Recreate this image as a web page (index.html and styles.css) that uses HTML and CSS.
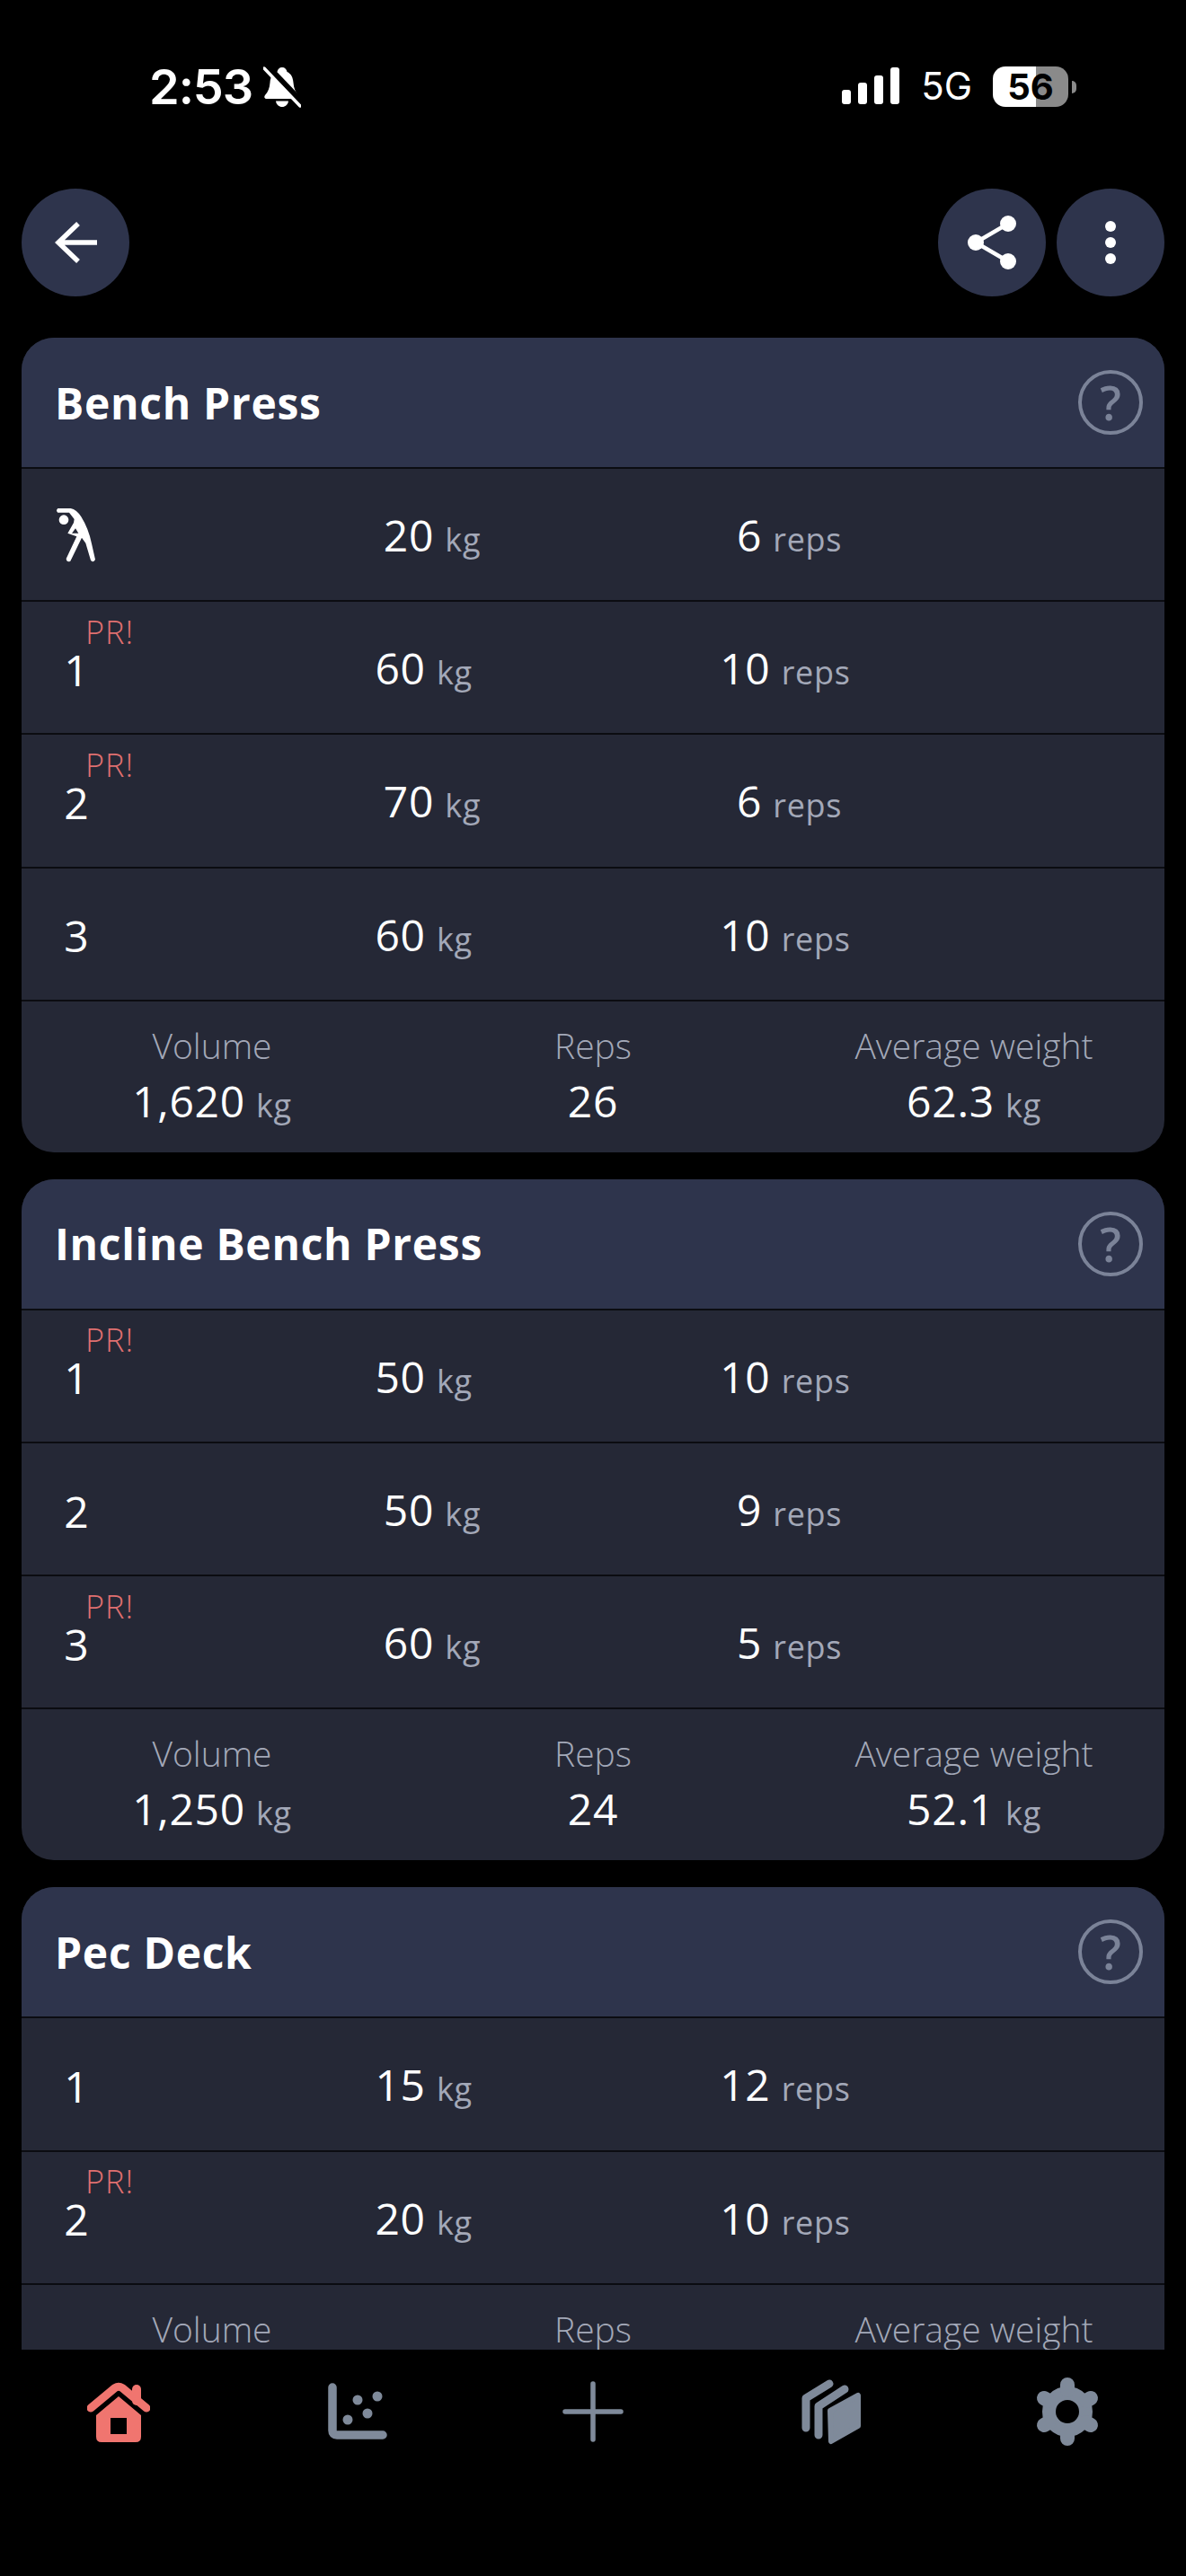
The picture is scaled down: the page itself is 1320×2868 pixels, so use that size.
FILE: index.html
```html
<!DOCTYPE html>
<html lang="en">
<head>
    <meta charset="UTF-8">
    <meta name="viewport" content="width=device-width, initial-scale=1.0">
    <title>Workout</title>
    <link rel="stylesheet" href="styles.css">
</head>

<body>
    <div class="app">
        <div class="status-bar">
            <div class="status-left">
                <span class="time">2:53</span>
                <svg class="bell" viewBox="0 0 42 46">
                    <path d="M21 1c-3 0-5 2-5.500 5C10 8 8 12 7.500 18c-.5 6-2 10-5.500 14-1.500 2-.5 4 2 4h33c2.500 0 3.500-2 2-4-3.500-4-5-8-5.500-14C33 12 31 8 26.500 6 26 3 24 1 21 1z" fill="#fff"/>
                    <path d="M14 38.500h14c-.5 4-3.500 6.500-7 6.500s-6.500-2.500-7-6.500z" fill="#fff"/>
                    <path d="M3 -1L44 42" stroke="#000" stroke-width="8"/>
                    <path d="M1 2L41 44" stroke="#fff" stroke-width="3.500" stroke-linecap="round"/>
                </svg>
            </div>
            <div class="status-right">
                <div class="signal">
                    <span class="bar bar-1"></span>
                    <span class="bar bar-2"></span>
                    <span class="bar bar-3"></span>
                    <span class="bar bar-4"></span>
                </div>
                <span class="network">5G</span>
                <div class="battery"><span class="battery-level">56</span></div>
                <span class="battery-nub"></span>
            </div>
        </div>

        <div class="top-bar">
            <a class="round-btn">
                <svg width="60" height="60" viewBox="0 0 60 60"><path d="M11 30H54M33 9L11 30L33 51" fill="none" stroke="#fff" stroke-width="5.500"/></svg>
            </a>
            <div class="top-actions">
                <a class="round-btn">
                    <svg width="60" height="60" viewBox="0 0 60 60"><path d="M48 9L12 30L48 51" fill="none" stroke="#fff" stroke-width="4.500"/><circle cx="48" cy="9" r="9" fill="#fff"/><circle cx="12" cy="30" r="9" fill="#fff"/><circle cx="48" cy="51" r="9" fill="#fff"/></svg>
                </a>
                <a class="round-btn">
                    <svg width="60" height="60" viewBox="0 0 60 60"><circle cx="30" cy="12" r="6" fill="#fff"/><circle cx="30" cy="30" r="6" fill="#fff"/><circle cx="30" cy="48" r="6" fill="#fff"/></svg>
                </a>
            </div>
        </div>

        <div class="list">
            <!-- Bench Press -->
            <div class="card">
                <div class="card-header">
                    <span class="card-title">Bench Press</span>
                    <span class="help">?</span>
                </div>
                <div class="set">
                    <div class="set-index">
                        <svg class="warmup" viewBox="66 66 136 192"><path fill-rule="evenodd" d="M72 72H115Q135 76 150 100Q175 140 185 190L197 243Q190 256 182 245L165 188L152 170L114 248Q102 254 100 240L135 166L105 155L125 120L127 108L110 86H72Q64 79 72 72ZM119 155H141L131 139Z" fill="#fff"/><circle cx="92" cy="110" r="16" fill="#fff"/></svg>
                    </div>
                    <div class="set-values">
                        <span class="value">20 <small>kg</small></span>
                        <span class="value">6 <small>reps</small></span>
                    </div>
                </div>
                <div class="set">
                    <div class="set-index">1<span class="pr">PR!</span></div>
                    <div class="set-values">
                        <span class="value">60 <small>kg</small></span>
                        <span class="value">10 <small>reps</small></span>
                    </div>
                </div>
                <div class="set">
                    <div class="set-index">2<span class="pr">PR!</span></div>
                    <div class="set-values">
                        <span class="value">70 <small>kg</small></span>
                        <span class="value">6 <small>reps</small></span>
                    </div>
                </div>
                <div class="set">
                    <div class="set-index">3</div>
                    <div class="set-values">
                        <span class="value">60 <small>kg</small></span>
                        <span class="value">10 <small>reps</small></span>
                    </div>
                </div>
                <div class="summary">
                    <div class="summary-item"><span class="summary-label">Volume</span><span class="value">1,620 <small>kg</small></span></div>
                    <div class="summary-item"><span class="summary-label">Reps</span><span class="value">26</span></div>
                    <div class="summary-item"><span class="summary-label">Average weight</span><span class="value">62.3 <small>kg</small></span></div>
                </div>
            </div>

            <!-- Incline Bench Press -->
            <div class="card">
                <div class="card-header">
                    <span class="card-title">Incline Bench Press</span>
                    <span class="help">?</span>
                </div>
                <div class="set">
                    <div class="set-index">1<span class="pr">PR!</span></div>
                    <div class="set-values">
                        <span class="value">50 <small>kg</small></span>
                        <span class="value">10 <small>reps</small></span>
                    </div>
                </div>
                <div class="set">
                    <div class="set-index">2</div>
                    <div class="set-values">
                        <span class="value">50 <small>kg</small></span>
                        <span class="value">9 <small>reps</small></span>
                    </div>
                </div>
                <div class="set">
                    <div class="set-index">3<span class="pr">PR!</span></div>
                    <div class="set-values">
                        <span class="value">60 <small>kg</small></span>
                        <span class="value">5 <small>reps</small></span>
                    </div>
                </div>
                <div class="summary">
                    <div class="summary-item"><span class="summary-label">Volume</span><span class="value">1,250 <small>kg</small></span></div>
                    <div class="summary-item"><span class="summary-label">Reps</span><span class="value">24</span></div>
                    <div class="summary-item"><span class="summary-label">Average weight</span><span class="value">52.1 <small>kg</small></span></div>
                </div>
            </div>

            <!-- Pec Deck -->
            <div class="card">
                <div class="card-header">
                    <span class="card-title">Pec Deck</span>
                    <span class="help">?</span>
                </div>
                <div class="set">
                    <div class="set-index">1</div>
                    <div class="set-values">
                        <span class="value">15 <small>kg</small></span>
                        <span class="value">12 <small>reps</small></span>
                    </div>
                </div>
                <div class="set">
                    <div class="set-index">2<span class="pr">PR!</span></div>
                    <div class="set-values">
                        <span class="value">20 <small>kg</small></span>
                        <span class="value">10 <small>reps</small></span>
                    </div>
                </div>
                <div class="summary">
                    <div class="summary-item"><span class="summary-label">Volume</span></div>
                    <div class="summary-item"><span class="summary-label">Reps</span></div>
                    <div class="summary-item"><span class="summary-label">Average weight</span></div>
                </div>
            </div>
        </div>

        <nav class="tabbar">
            <a class="tab">
                <svg width="70" height="70" viewBox="0 -3 70 70" fill="#f0756f">
                    <path fill-rule="evenodd" d="M35 15L60 36V60Q60 66 54 66H16Q10 66 10 60V36ZM26 39V57H44V39Z"/>
                    <path d="M4 28L31 5.500Q35 3 39 5.500L66 28" fill="none" stroke="#f0756f" stroke-width="9" stroke-linecap="round" stroke-linejoin="round"/>
                    <path d="M55 7V20" stroke="#f0756f" stroke-width="10" stroke-linecap="round"/>
                </svg>
            </a>
            <a class="tab">
                <svg width="70" height="74" viewBox="0 0 70 74" fill="#7f8a9a">
                    <path d="M9 10V58Q9 63 14 63H65" fill="none" stroke="#7f8a9a" stroke-width="9.500" stroke-linecap="round"/>
                    <circle cx="37" cy="24" r="5.500"/>
                    <circle cx="59" cy="20" r="5.500"/>
                    <circle cx="48" cy="39" r="5.500"/>
                    <circle cx="26" cy="46" r="5.500"/>
                </svg>
            </a>
            <a class="tab">
                <svg width="70" height="70" viewBox="0 0 70 70"><path d="M35 4V66M4 35H66" fill="none" stroke="#7f8a9a" stroke-width="5.500" stroke-linecap="round"/></svg>
            </a>
            <a class="tab">
                <svg width="70" height="74" viewBox="0 0 70 74">
                    <path d="M34 6L8 22V55" fill="none" stroke="#7f8a9a" stroke-width="9" stroke-linecap="round" stroke-linejoin="round"/>
                    <path d="M51 12L22 31V63" fill="none" stroke="#7f8a9a" stroke-width="9" stroke-linecap="round" stroke-linejoin="round"/>
                    <path d="M35 36L66 19V53L36 70Z" fill="#7f8a9a" stroke="#7f8a9a" stroke-width="6" stroke-linejoin="round"/>
                </svg>
            </a>
            <a class="tab">
                <svg width="76" height="76" viewBox="-38 -38 76 76" fill="none" stroke="#7f8a9a">
                    <circle r="20.500" stroke-width="15"/>
                    <path d="M0 -24V-30M0 24V30M-20.800 -12L-26 -15M20.800 -12L26 -15M-20.800 12L-26 15M20.800 12L26 15" stroke-width="16" stroke-linecap="round"/>
                </svg>
            </a>
        </nav>
    </div>
</body>
</html>
```

FILE: styles.css
```css
body {
    background-color: #000;
    color: #fff;
    font-family: 'Open Sans', 'Liberation Sans', sans-serif;
    margin: 0;
    padding: 0;
    overflow: hidden;
}

.app {
    height: 2868px;
    display: flex;
    flex-direction: column;
}

/* Status bar */
.status-bar {
    height: 210px;
    box-sizing: border-box;
    padding: 74px 122px 0 166px;
    display: flex;
    justify-content: space-between;
    align-items: flex-start;
    flex-shrink: 0;
    font-family: 'Inter', 'Liberation Sans', sans-serif;
}

.status-left {
    display: flex;
    align-items: flex-start;
    gap: 12px;
}

.time {
    font-size: 54px;
    font-weight: 600;
    line-height: 46px;
    letter-spacing: -1px;
}

.bell {
    width: 42px;
    height: 46px;
}

.status-right {
    display: flex;
    align-items: flex-start;
}

.signal {
    display: flex;
    align-items: flex-end;
    gap: 8px;
    height: 42px;
    margin-right: 24px;
}

.bar {
    width: 10px;
    background-color: #fff;
    border-radius: 3px;
}

.bar-1 { height: 16px; }
.bar-2 { height: 24px; }
.bar-3 { height: 32px; }
.bar-4 { height: 41px; }

.network {
    font-size: 42px;
    line-height: 44px;
    margin-right: 23px;
}

.battery {
    width: 84px;
    height: 45px;
    border-radius: 14px;
    background: linear-gradient(to right, #fff 57%, #8a8a8a 57%);
    display: flex;
    align-items: center;
    justify-content: center;
}

.battery-level {
    color: #000;
    font-size: 40px;
    font-weight: 700;
    line-height: 45px;
}

.battery-nub {
    width: 5px;
    height: 14px;
    margin: 16px 0 0 4px;
    background-color: #8a8a8a;
    border-radius: 0 7px 7px 0;
}

/* Top buttons */
.top-bar {
    display: flex;
    justify-content: space-between;
    padding: 0 24px;
    flex-shrink: 0;
}

.top-actions {
    display: flex;
    gap: 12px;
}

.round-btn {
    width: 120px;
    height: 120px;
    border-radius: 50%;
    background-color: #2e344c;
    display: flex;
    align-items: center;
    justify-content: center;
}

/* Exercise list */
.list {
    flex: 1;
    min-height: 0;
    overflow: hidden;
    padding: 46px 24px 0;
    display: flex;
    flex-direction: column;
    gap: 30px;
}

.card {
    flex-shrink: 0;
    background-color: #252836;
    border-radius: 36px;
    overflow: hidden;
}

.card-header {
    height: 144px;
    background-color: #2e344c;
    display: flex;
    align-items: center;
    justify-content: space-between;
    padding: 0 24px 0 37px;
}

.card-title {
    font-size: 48px;
    font-weight: 700;
    letter-spacing: 0.7px;
}

.help {
    width: 64px;
    height: 64px;
    border: 4px solid #7b8398;
    border-radius: 50%;
    color: #7b8398;
    font-size: 52px;
    font-weight: 600;
    line-height: 64px;
    text-align: center;
}

.set {
    height: 148.200px;
    box-sizing: border-box;
    border-top: 2px solid #0b0c11;
    display: flex;
    align-items: center;
    padding: 0 74px 0 38px;
}

.set-index {
    position: relative;
    width: 46px;
    margin-right: 34px;
    font-size: 48px;
    font-weight: 500;
    text-align: center;
    padding-top: 4px;
    flex-shrink: 0;
}

.warmup {
    display: block;
    width: 46px;
    height: 64px;
    margin-top: -2px;
}

.pr {
    position: absolute;
    left: 33px;
    top: -27px;
    color: #e07070;
    font-size: 36px;
    font-weight: 300;
    line-height: 44px;
    letter-spacing: 1px;
}

.set-values {
    flex: 1;
    display: flex;
    justify-content: space-evenly;
    padding-top: 7px;
}

.value {
    font-size: 48px;
    font-weight: 500;
    line-height: 64px;
    letter-spacing: 0.7px;
    white-space: nowrap;
}

.value small {
    color: #a3a8b8;
    font-size: 36px;
    font-weight: 400;
    margin-left: -1px;
}

.summary {
    height: 170px;
    box-sizing: border-box;
    border-top: 2px solid #0b0c11;
    display: grid;
    grid-template-columns: repeat(3, 1fr);
    padding-top: 19px;
}

.summary-item {
    display: flex;
    flex-direction: column;
    align-items: center;
}

.summary-label {
    color: #a3a8b8;
    font-size: 39px;
    font-weight: 300;
    line-height: 60px;
}

/* Bottom navigation */
.tabbar {
    height: 252px;
    flex-shrink: 0;
    box-sizing: border-box;
    display: flex;
    align-items: flex-start;
}

.tab {
    flex: 1;
    height: 138px;
    display: flex;
    align-items: center;
    justify-content: center;
}
```
